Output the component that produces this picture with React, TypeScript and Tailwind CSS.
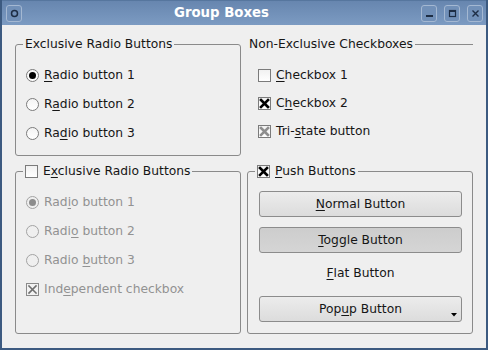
import React from "react";

type Tri = "off" | "on" | "tri";

// label with one mnemonic letter underlined (Qt style)
function Mn({ text, at }: { text: string; at?: number }) {
  if (at === undefined) return <span>{text}</span>;
  return (
    <span>
      {text.slice(0, at)}
      <span className="underline underline-offset-[2px] decoration-1">{text[at]}</span>
      {text.slice(at + 1)}
    </span>
  );
}

function Radio({ checked, disabled }: { checked?: boolean; disabled?: boolean }) {
  return (
    <span
      className={
        "flex h-[13px] w-[13px] shrink-0 items-center justify-center rounded-full border " +
        (disabled
          ? "border-[#a3a3a3] bg-[#efefef]"
          : "border-[#7b7b7b] bg-linear-to-b from-[#f4f4f4] to-white")
      }
    >
      {checked && (
        <span
          className={
            "h-[7px] w-[7px] rounded-full " +
            (disabled ? "bg-[#8c8c8c]" : "bg-black")
          }
        />
      )}
    </span>
  );
}

function Check({ state, disabled }: { state: Tri; disabled?: boolean }) {
  const stroke = disabled ? "#6f6f6f" : state === "tri" ? "#8e8e8e" : "#000";
  return (
    <span
      className={
        "flex h-[13px] w-[13px] shrink-0 items-center justify-center border " +
        (disabled
          ? "border-[#8a8a8a] bg-[#f2f2f2]"
          : "border-[#7b7b7b] bg-linear-to-b from-[#f1f1f1] to-white")
      }
    >
      {state !== "off" && (
        <svg width="11" height="11" viewBox="0 0 11 11">
          <path
            d="M2 2 L9 9 M9 2 L2 9"
            stroke={stroke}
            strokeWidth={disabled ? 1.6 : 2.6}
            strokeLinecap="square"
          />
        </svg>
      )}
    </span>
  );
}

function RadioRow({ label, at, checked, disabled }: { label: string; at: number; checked?: boolean; disabled?: boolean }) {
  return (
    <div className={"flex h-[29px] items-center gap-[5px] " + (disabled ? "text-[#929292]" : "")}>
      <Radio checked={checked} disabled={disabled} />
      <Mn text={label} at={at} />
    </div>
  );
}

function CheckRow({ label, at, state, disabled, h = "h-[28px]" }: { label: string; at: number; state: Tri; disabled?: boolean; h?: string }) {
  return (
    <div className={"flex items-center gap-[5px] " + h + (disabled ? " text-[#929292]" : "")}>
      <Check state={state} disabled={disabled} />
      <Mn text={label} at={at} />
    </div>
  );
}

function PushButton({ label, at, toggled, popup }: { label: string; at: number; toggled?: boolean; popup?: boolean }) {
  return (
    <div
      className={
        "relative flex h-[26px] w-[203px] items-center justify-center rounded-[3px] border border-[#8c8c8c] " +
        (toggled
          ? "bg-linear-to-b from-[#cdcdcd] to-[#d5d5d5]"
          : "bg-linear-to-b from-[#ececec] to-[#dcdcdc]")
      }
    >
      <Mn text={label} at={at} />
      {popup && (
        <svg className="absolute bottom-[4px] right-[4px]" width="6" height="4" viewBox="0 0 6 4">
          <path d="M0 0 H6 L3 3.5 Z" fill="#000" />
        </svg>
      )}
    </div>
  );
}

function TitleButton({ children }: { children: React.ReactNode }) {
  return (
    <div className="flex h-[17px] w-[16px] items-center justify-center rounded-[3px] border border-[#a4b8d2] bg-[#7190b8]">
      {children}
    </div>
  );
}

export default function App() {
  return (
    <div className="flex h-[350px] w-[488px] flex-col border-x-2 border-b-2 border-[#3c5a80] bg-[#efefef] font-['DejaVu_Sans',sans-serif] text-[12.3px] text-[#161616]">
      {/* title bar */}
      <div className="flex h-[25px] shrink-0 items-center border-t border-[#56769e] bg-linear-to-b from-[#6786af] to-[#7c9bc2] pl-[4px] pr-[3px]">
        <TitleButton>
          <svg width="9" height="9" viewBox="0 0 9 9">
            <circle cx="4.5" cy="4.5" r="3" fill="none" stroke="#1d2d44" strokeWidth="1.5" />
          </svg>
        </TitleButton>
        <div className="flex-1 text-center text-[13.3px] font-bold text-white">Group Boxes</div>
        <div className="flex gap-[7px]">
          <TitleButton>
            <svg width="9" height="9" viewBox="0 0 9 9">
              <rect x="1" y="6" width="7" height="2" fill="#1d2d44" />
            </svg>
          </TitleButton>
          <TitleButton>
            <svg width="9" height="9" viewBox="0 0 9 9">
              <rect x="1.5" y="1.5" width="6" height="6" fill="none" stroke="#1d2d44" strokeWidth="1.2" />
              <rect x="1" y="1" width="7" height="2" fill="#1d2d44" />
            </svg>
          </TitleButton>
          <TitleButton>
            <svg width="9" height="9" viewBox="0 0 9 9">
              <path d="M1.5 1.5 L7.5 7.5 M7.5 1.5 L1.5 7.5" stroke="#1d2d44" strokeWidth="1.4" />
            </svg>
          </TitleButton>
        </div>
      </div>

      {/* body */}
      <div className="grid grid-cols-[226px_226px] grid-rows-[120px_171px] gap-x-[6px] gap-y-[7px] pl-[13px] pt-[11px]">
        <fieldset className="rounded-[3px] border border-[#8a8a8a] pl-[7px]">
          <legend className="h-[16px] px-[2px] leading-[16px]">Exclusive Radio Buttons</legend>
          <div className="ml-[3px] pt-[9px]">
            <RadioRow label="Radio button 1" at={0} checked />
            <RadioRow label="Radio button 2" at={1} />
            <RadioRow label="Radio button 3" at={2} />
          </div>
        </fieldset>

        <div>
          <div className="flex h-[16px] items-center pl-[2px] leading-[16px]">
            <span>Non-Exclusive Checkboxes</span>
            <span className="ml-[2px] h-px flex-1 bg-[#8a8a8a]" />
          </div>
          <div className="ml-[11px] pt-[9px]">
            <CheckRow label="Checkbox 1" at={0} state="off" />
            <CheckRow label="Checkbox 2" at={1} state="on" />
            <CheckRow label="Tri-state button" at={4} state="tri" />
          </div>
        </div>

        <fieldset className="rounded-[3px] border border-[#8a8a8a] pl-[7px]">
          <legend className="px-[2px]">
            <CheckRow label="Exclusive Radio Buttons" at={1} state="off" h="h-[16px]" />
          </legend>
          <div className="ml-[3px] pt-[9px]">
            <RadioRow label="Radio button 1" at={3} checked disabled />
            <RadioRow label="Radio button 2" at={4} disabled />
            <RadioRow label="Radio button 3" at={6} disabled />
            <CheckRow label="Independent checkbox" at={3} state="on" disabled h="h-[29px]" />
          </div>
        </fieldset>

        <fieldset className="rounded-[3px] border border-[#8a8a8a] pl-[7px]">
          <legend className="px-[2px]">
            <CheckRow label="Push Buttons" at={0} state="on" h="h-[16px]" />
          </legend>
          <div className="ml-[4px] flex flex-col pt-[12px]">
            <PushButton label="Normal Button" at={0} />
            <div className="mt-[10px]">
              <PushButton label="Toggle Button" at={0} toggled />
            </div>
            <div className="mt-[7px] flex h-[26px] w-[203px] items-center justify-center">
              <Mn text="Flat Button" at={0} />
            </div>
            <div className="mt-[10px]">
              <PushButton label="Popup Button" at={3} popup />
            </div>
          </div>
        </fieldset>
      </div>
    </div>
  );
}
